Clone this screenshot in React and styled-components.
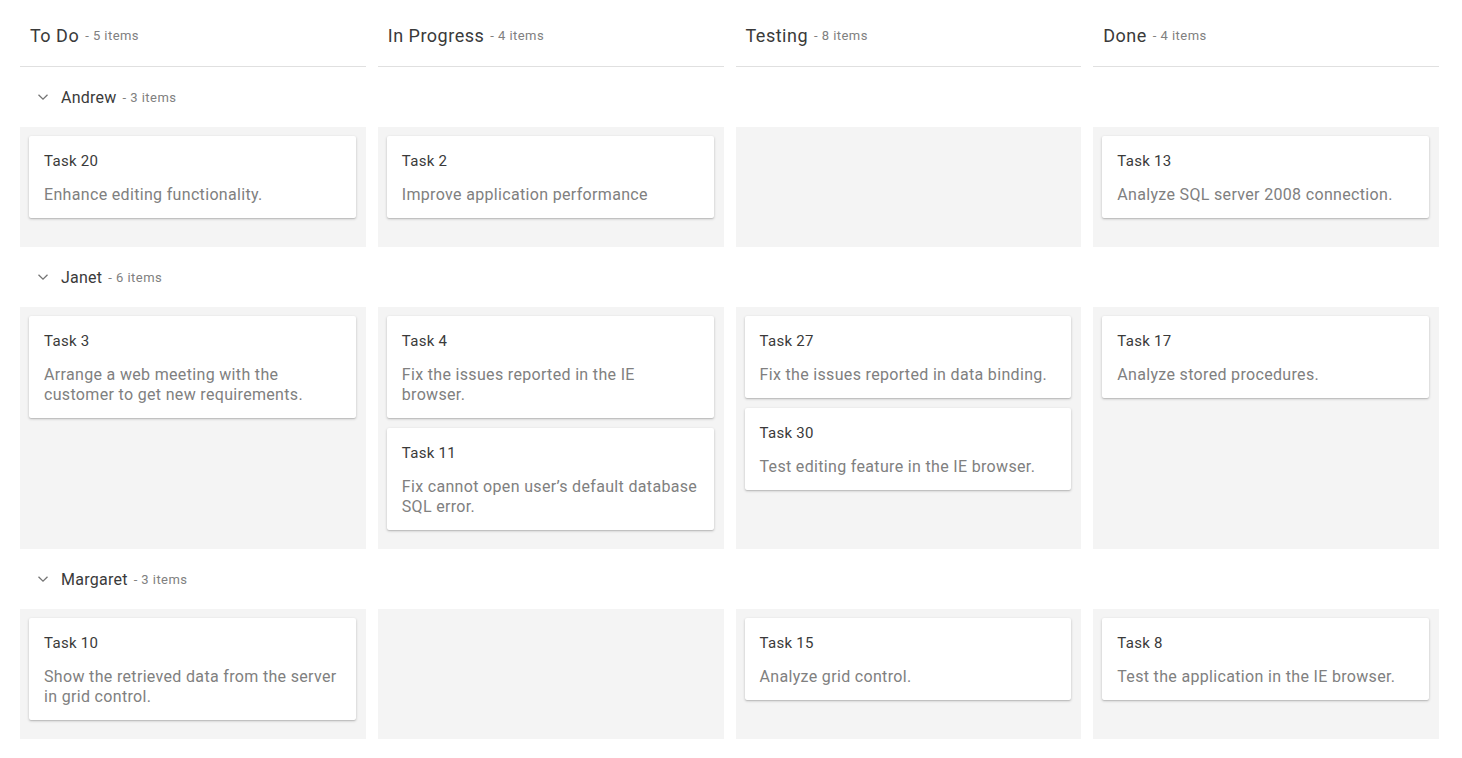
import React from "react";
import styled, { createGlobalStyle } from "styled-components";

const GlobalStyle = createGlobalStyle`
  body {
    margin: 0;
    background: #fff;
    font-family: Roboto, "Liberation Sans", sans-serif;
  }
`;

const Board = styled.div`
  width: 1419px;
  padding-left: 20px;
`;

const Columns = styled.div`
  display: grid;
  grid-template-columns: repeat(4, 1fr);
  column-gap: 12px;
`;

const ColumnHeader = styled.div`
  box-sizing: border-box;
  height: 67px;
  padding: 4px 0 0 10px;
  display: flex;
  align-items: center;
  border-bottom: 1px solid #e0e0e0;
`;

const ColumnTitle = styled.span`
  font-size: 18px;
  letter-spacing: 0.5px;
  color: #3a3a3a;
`;

const Count = styled.span`
  font-size: 13px;
  letter-spacing: 0.45px;
  color: #808080;
  margin-left: 6px;
`;

const LaneHeader = styled.div`
  height: 60px;
  display: flex;
  align-items: center;
  padding-left: 17px;
`;

const Chevron = styled.svg`
  width: 12px;
  height: 12px;
  margin-right: 12px;
`;

const LaneTitle = styled.span`
  font-size: 16px;
  letter-spacing: 0.25px;
  color: #3a3a3a;
`;

const Cell = styled.div`
  box-sizing: border-box;
  min-height: 120px;
  background: #f4f4f4;
  padding: 9px 10px 19px 9px;
  display: flex;
  flex-direction: column;
  gap: 10px;
`;

const Card = styled.div`
  background: #fff;
  border-radius: 2px;
  box-shadow: 0 1px 3px rgba(0, 0, 0, 0.2), 0 1px 1px rgba(0, 0, 0, 0.1);
  padding: 15px 14px 13px 15px;
`;

const CardTitle = styled.div`
  font-size: 15px;
  letter-spacing: 0.3px;
  line-height: 20px;
  color: #3a3a3a;
  margin-bottom: 14px;
`;

const CardText = styled.div`
  font-size: 16px;
  letter-spacing: 0.33px;
  line-height: 20px;
  color: #808080;
`;

const columns = [
  { title: "To Do", count: 5 },
  { title: "In Progress", count: 4 },
  { title: "Testing", count: 8 },
  { title: "Done", count: 4 },
];

const lanes = [
  {
    name: "Andrew",
    count: 3,
    cells: [
      [{ id: 20, text: "Enhance editing functionality." }],
      [{ id: 2, text: "Improve application performance" }],
      [],
      [{ id: 13, text: "Analyze SQL server 2008 connection." }],
    ],
  },
  {
    name: "Janet",
    count: 6,
    cells: [
      [{ id: 3, text: "Arrange a web meeting with the customer to get new requirements." }],
      [
        { id: 4, text: "Fix the issues reported in the IE browser." },
        { id: 11, text: "Fix cannot open user’s default database SQL error." },
      ],
      [
        { id: 27, text: "Fix the issues reported in data binding." },
        { id: 30, text: "Test editing feature in the IE browser." },
      ],
      [{ id: 17, text: "Analyze stored procedures." }],
    ],
  },
  {
    name: "Margaret",
    count: 3,
    cells: [
      [{ id: 10, text: "Show the retrieved data from the server in grid control." }],
      [],
      [{ id: 15, text: "Analyze grid control." }],
      [{ id: 8, text: "Test the application in the IE browser." }],
    ],
  },
];

const App = () => (
  <Board>
    <GlobalStyle />
    <Columns>
      {columns.map((c) => (
        <ColumnHeader key={c.title}>
          <ColumnTitle>{c.title}</ColumnTitle>
          <Count>- {c.count} items</Count>
        </ColumnHeader>
      ))}
    </Columns>
    {lanes.map((lane) => (
      <React.Fragment key={lane.name}>
        <LaneHeader>
          <Chevron viewBox="0 0 12 12">
            <path d="M1.5 3.8 L6 8.2 L10.5 3.8" fill="none" stroke="#757575" strokeWidth="1.3" />
          </Chevron>
          <LaneTitle>{lane.name}</LaneTitle>
          <Count>- {lane.count} items</Count>
        </LaneHeader>
        <Columns>
          {lane.cells.map((cards, i) => (
            <Cell key={i}>
              {cards.map((card) => (
                <Card key={card.id}>
                  <CardTitle>Task {card.id}</CardTitle>
                  <CardText>{card.text}</CardText>
                </Card>
              ))}
            </Cell>
          ))}
        </Columns>
      </React.Fragment>
    ))}
  </Board>
);

export default App;
